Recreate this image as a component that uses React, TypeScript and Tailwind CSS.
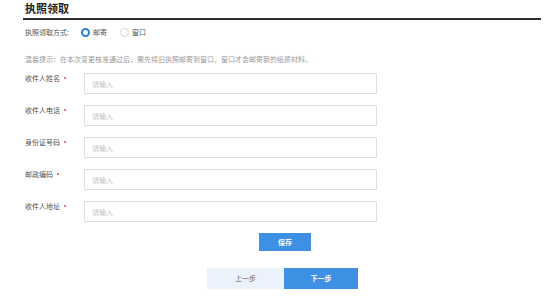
import { useState } from 'react';

const fields = ['收件人姓名', '收件人电话', '身份证号码', '邮政编码', '收件人地址'];

export default function App() {
  const [method, setMethod] = useState<'mail' | 'window'>('mail');

  return (
    <div
      className="w-[553px] h-[297px] bg-white overflow-hidden"
      style={{ fontFamily: '"Noto Sans CJK SC", "Noto Sans", sans-serif' }}
    >
      <div className="ml-[23px] mr-[12px] border-b-2 border-[#2b2f33] h-[20px] pl-[2px] pt-[1px]">
        <h1 className="text-[11px] leading-[14px] font-bold text-[#222]">执照领取</h1>
      </div>

      <div className="ml-[25px] mt-[7px] h-[10px] flex items-center text-[7px] text-[#555]">
        <span className="w-[56px]">执照领取方式:</span>
        <label className="flex items-center gap-[3px] cursor-pointer" onClick={() => setMethod('mail')}>
          <span
            className={
              method === 'mail'
                ? 'w-[9px] h-[9px] rounded-full border-[2.5px] border-[#2d7fd6] bg-white'
                : 'w-[9px] h-[9px] rounded-full border border-[#d0d4da] bg-white'
            }
          />
          <span>邮寄</span>
        </label>
        <label className="flex items-center gap-[3px] ml-[13px] cursor-pointer" onClick={() => setMethod('window')}>
          <span
            className={
              method === 'window'
                ? 'w-[9px] h-[9px] rounded-full border-[2.5px] border-[#2d7fd6] bg-white'
                : 'w-[9px] h-[9px] rounded-full border border-[#d0d4da] bg-white'
            }
          />
          <span>窗口</span>
        </label>
      </div>

      <p className="ml-[25px] mt-[17px] text-[7px] leading-[10px] text-[#999]">
        温馨提示：在本次变更核准通过后，需先将旧执照邮寄到窗口，窗口才会邮寄新的纸质材料。
      </p>

      <div className="mt-[9px] flex flex-col gap-[11px]">
        {fields.map((f) => (
          <div key={f} className="flex ml-[25px]">
            <div className="w-[59px] h-[10px] text-[7px] leading-[10px] text-[#555] flex items-center">
              {f}
              <span className="w-[2px] h-[2px] rounded-full bg-[#e0484d] ml-[4px]" />
            </div>
            <input
              placeholder="请输入"
              className="w-[293px] h-[21px] border border-[#dcdfe6] rounded-[1px] px-[7px] text-[7px] text-[#333] placeholder:text-[#bfc3c9] outline-none"
            />
          </div>
        ))}
      </div>

      <button className="block ml-[259px] mt-[11px] w-[52px] h-[18px] bg-[#3d90e3] text-white text-[7px] font-bold">
        保存
      </button>

      <div className="flex ml-[207px] mt-[17px]">
        <button className="w-[77px] h-[21px] bg-[#eaf3fc] text-[#666] text-[7px]">上一步</button>
        <button className="w-[74px] h-[21px] bg-[#3d90e3] text-white text-[7px] font-bold">下一步</button>
      </div>
    </div>
  );
}
